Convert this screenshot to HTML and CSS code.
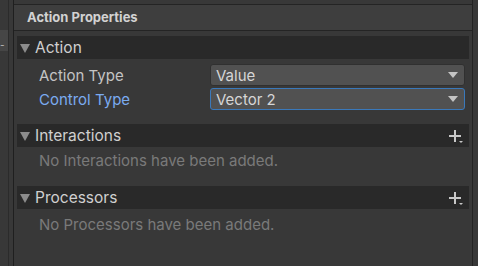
FILE: index.html
```html
<!DOCTYPE html>
<html lang="en">
<head>
<meta charset="UTF-8">
<title>Action Properties</title>
<link rel="stylesheet" href="styles.css">
</head>
<body>

<div class="sidebar">
    <div class="side-tab">-</div>
</div>
<div class="gutter"></div>

<div class="panel">
    <div class="title-bar">Action Properties</div>

    <div class="content">
        <div class="foldout">
            <span class="arrow"></span>
            <span class="foldout-label">Action</span>
        </div>
        <div class="fields">
            <div class="field">
                <label class="field-label">Action Type</label>
                <div class="dropdown">
                    <span>Value</span>
                    <span class="caret"></span>
                </div>
            </div>
            <div class="field">
                <label class="field-label focused">Control Type</label>
                <div class="dropdown focused">
                    <span>Vector 2</span>
                    <span class="caret"></span>
                </div>
            </div>
        </div>

        <div class="foldout section">
            <span class="arrow"></span>
            <span class="foldout-label">Interactions</span>
            <svg class="add-icon" width="16" height="16" viewBox="0 0 16 16">
                <path d="M7 2v12M1 8h12" stroke="#c8c8c8" stroke-width="2" fill="none"/>
                <path d="M11 13h4l-2 2z" fill="#c8c8c8"/>
            </svg>
        </div>
        <div class="empty">No Interactions have been added.</div>

        <div class="foldout">
            <span class="arrow"></span>
            <span class="foldout-label">Processors</span>
            <svg class="add-icon" width="16" height="16" viewBox="0 0 16 16">
                <path d="M7 2v12M1 8h12" stroke="#c8c8c8" stroke-width="2" fill="none"/>
                <path d="M11 13h4l-2 2z" fill="#c8c8c8"/>
            </svg>
        </div>
        <div class="empty last">No Processors have been added.</div>
    </div>
</div>

<div class="edge"></div>

</body>
</html>
```

FILE: styles.css
```css
/* Inspector panel */
html, body {
    margin: 0;
    height: 100%;
}

body {
    display: flex;
    background-color: #383838;
    font-family: Inter, "Liberation Sans", sans-serif;
    font-size: 15px;
    color: #c4c4c4;
    overflow: hidden;
}

.sidebar {
    width: 8px;
    padding-top: 30px;
    background-color: #383838;
}

.side-tab {
    height: 21px;
    background-color: #464646;
    color: #bdbdbd;
    font-size: 10px;
    line-height: 30px;
    overflow: hidden;
}

.gutter {
    width: 4px;
    border-left: 1px solid #2b2b2b;
    border-right: 1px solid #1f1f1f;
    background-color: #383838;
}

.panel {
    width: 458px;
    padding-top: 4px;
    border-right: 1px solid #232323;
}

.title-bar {
    height: 25px;
    border-top: 1px solid #242424;
    border-bottom: 1px solid #242424;
    background-color: #3e3e3e;
    padding-left: 13px;
    font-size: 13px;
    font-weight: bold;
    line-height: 25px;
    color: #d2d2d2;
}

.content {
    padding: 5px 3px 0 3px;
}

.foldout {
    display: flex;
    align-items: center;
    height: 23px;
    background-color: #292929;
    padding-left: 3px;
    padding-right: 5px;
}

.foldout.section {
    margin-top: 14px;
}

.arrow {
    width: 0;
    height: 0;
    border-left: 5px solid transparent;
    border-right: 5px solid transparent;
    border-top: 9px solid #8c8c8c;
    margin-right: 5px;
    margin-top: 1px;
}

.foldout-label {
    flex: 1;
    font-size: 15.5px;
    color: #d0d0d0;
}

.add-icon {
    align-self: flex-start;
    margin-top: 4px;
}

.fields {
    padding: 5px 4px 0 22px;
}

.field {
    display: flex;
    align-items: center;
    height: 22px;
    margin-bottom: 2px;
}

.field-label {
    width: 171px;
    font-size: 15px;
}

.field-label.focused {
    color: #7babf0;
}

.dropdown {
    flex: 1;
    display: flex;
    align-items: center;
    justify-content: space-between;
    height: 20px;
    padding: 0 6px 0 5px;
    background-color: #515151;
    border: 1px solid #303030;
    border-radius: 3px;
    color: #d6d6d6;
    font-size: 15px;
}

.dropdown.focused {
    border-color: #3a79bb;
}

.caret {
    width: 0;
    height: 0;
    border-left: 5px solid transparent;
    border-right: 5px solid transparent;
    border-top: 6px solid #c4c4c4;
}

.empty {
    height: 39px;
    padding-left: 22px;
    line-height: 28px;
    color: #7a7a7a;
    font-size: 15px;
}

.empty.last {
    line-height: 31px;
}

.edge {
    flex: 1;
    background-color: #383838;
}
```
